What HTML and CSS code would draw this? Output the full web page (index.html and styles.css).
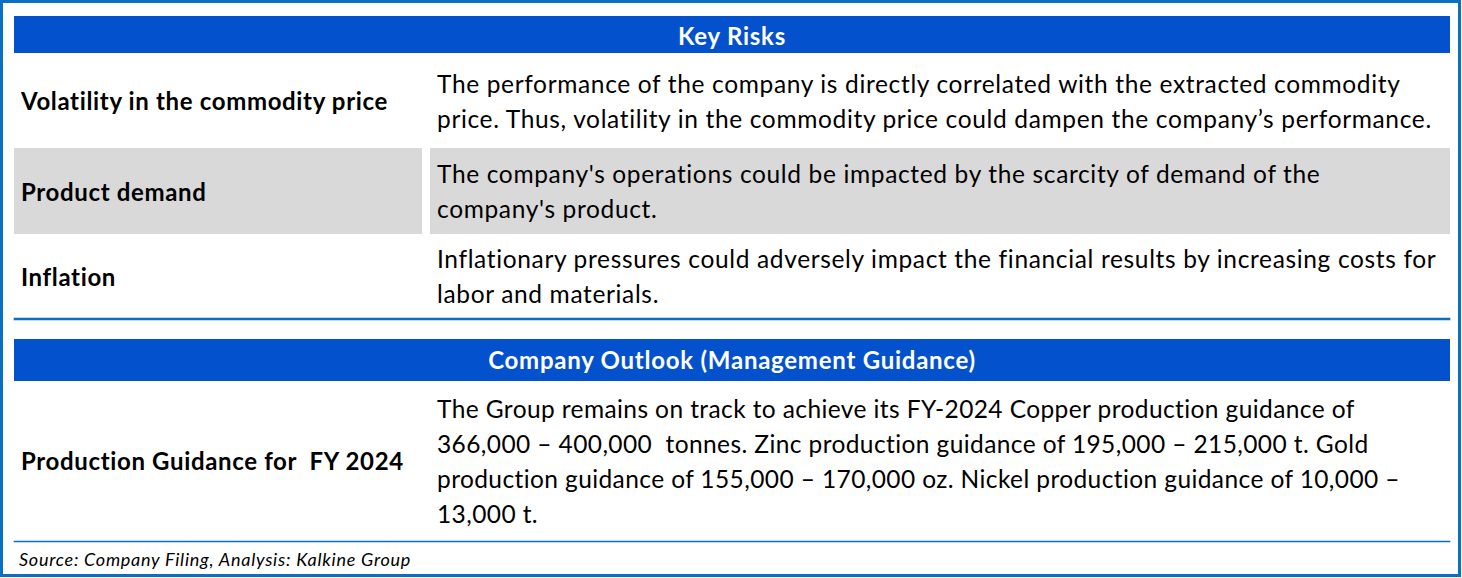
FILE: index.html
```html
<!DOCTYPE html>
<html lang="en">
<head>
<meta charset="utf-8">
<title>Key Risks</title>
<link rel="stylesheet" href="styles.css">
</head>
<body>
<div class="frame">
  <section class="block">
    <div class="band band-risks">Key Risks</div>
    <div class="row row-1">
      <div class="cell label">Volatility in the commodity price</div>
      <div class="cell text">The performance of the company is directly correlated with the extracted commodity<br>price. Thus, volatility in the commodity price could dampen the company’s performance.</div>
    </div>
    <div class="row row-2 shaded">
      <div class="cell label">Product demand</div>
      <div class="cell text">The company's operations could be impacted by the scarcity of demand of the<br>company's product.</div>
    </div>
    <div class="row row-3">
      <div class="cell label">Inflation</div>
      <div class="cell text">Inflationary pressures could adversely impact the financial results by increasing costs for<br>labor and materials.</div>
    </div>
  </section>
  <div class="rule"></div>
  <section class="block block-outlook">
    <div class="band band-outlook">Company Outlook (Management Guidance)</div>
    <div class="row row-4">
      <div class="cell label">Production Guidance for&nbsp; FY 2024</div>
      <div class="cell text text-dense">The Group remains on track to achieve its FY-2024 Copper production guidance of<br>366,000 – 400,000&nbsp; tonnes. Zinc production guidance of 195,000 – 215,000 t. Gold<br>production guidance of 155,000 – 170,000 oz. Nickel production guidance of 10,000 –<br>13,000 t.</div>
    </div>
  </section>
  <div class="rule"></div>
  <p class="source">Source: Company Filing, Analysis: Kalkine Group</p>
</div>
</body>
</html>
```

FILE: styles.css
```css
html, body {
  margin: 0;
  padding: 0;
  background: #ffffff;
}

body {
  font-family: Lato, "Open Sans", "Liberation Sans", sans-serif;
  color: #000000;
}

.frame {
  box-sizing: border-box;
  width: 1461px;
  height: 577px;
  border: 3px solid #0a70c4;
  padding: 13px 8px 0 11px;
  display: flex;
  flex-direction: column;
}

.band {
  background: #0451cd;
  color: #ffffff;
  font-weight: 700;
  font-size: 24px;
  letter-spacing: 0.75px;
  text-align: center;
  display: flex;
  align-items: center;
  justify-content: center;
}

.band-risks {
  height: 37px;
  padding-top: 1px;
  box-sizing: border-box;
}

.band-outlook {
  height: 42px;
}

.block-outlook {
  margin-top: 19px;
}

.row {
  display: grid;
  grid-template-columns: 408px 1020px;
  column-gap: 8px;
}

.cell {
  display: flex;
  align-items: center;
  padding: 0 7px;
  line-height: 35px;
  font-size: 24.5px;
  letter-spacing: 0.65px;
}

.label {
  font-weight: 700;
  font-size: 24px;
  letter-spacing: 0.65px;
}

.text {
  white-space: nowrap;
}

.text-dense {
  letter-spacing: 0.4px;
}

.row-1 {
  height: 95px;
}

.row-2 {
  height: 86px;
}

.row-3 {
  height: 84px;
}

.row-4 {
  height: 160px;
}

.shaded .cell {
  background: #d9d9d9;
}

.rule {
  height: 2px;
  background: #0a70c4;
  box-shadow: 0 0 0 0.5px #7fb3e0;
}

.source {
  margin: 0;
  padding-left: 5px;
  height: 32px;
  line-height: 34px;
  font-style: italic;
  font-size: 18px;
  letter-spacing: 0.75px;
}
```
